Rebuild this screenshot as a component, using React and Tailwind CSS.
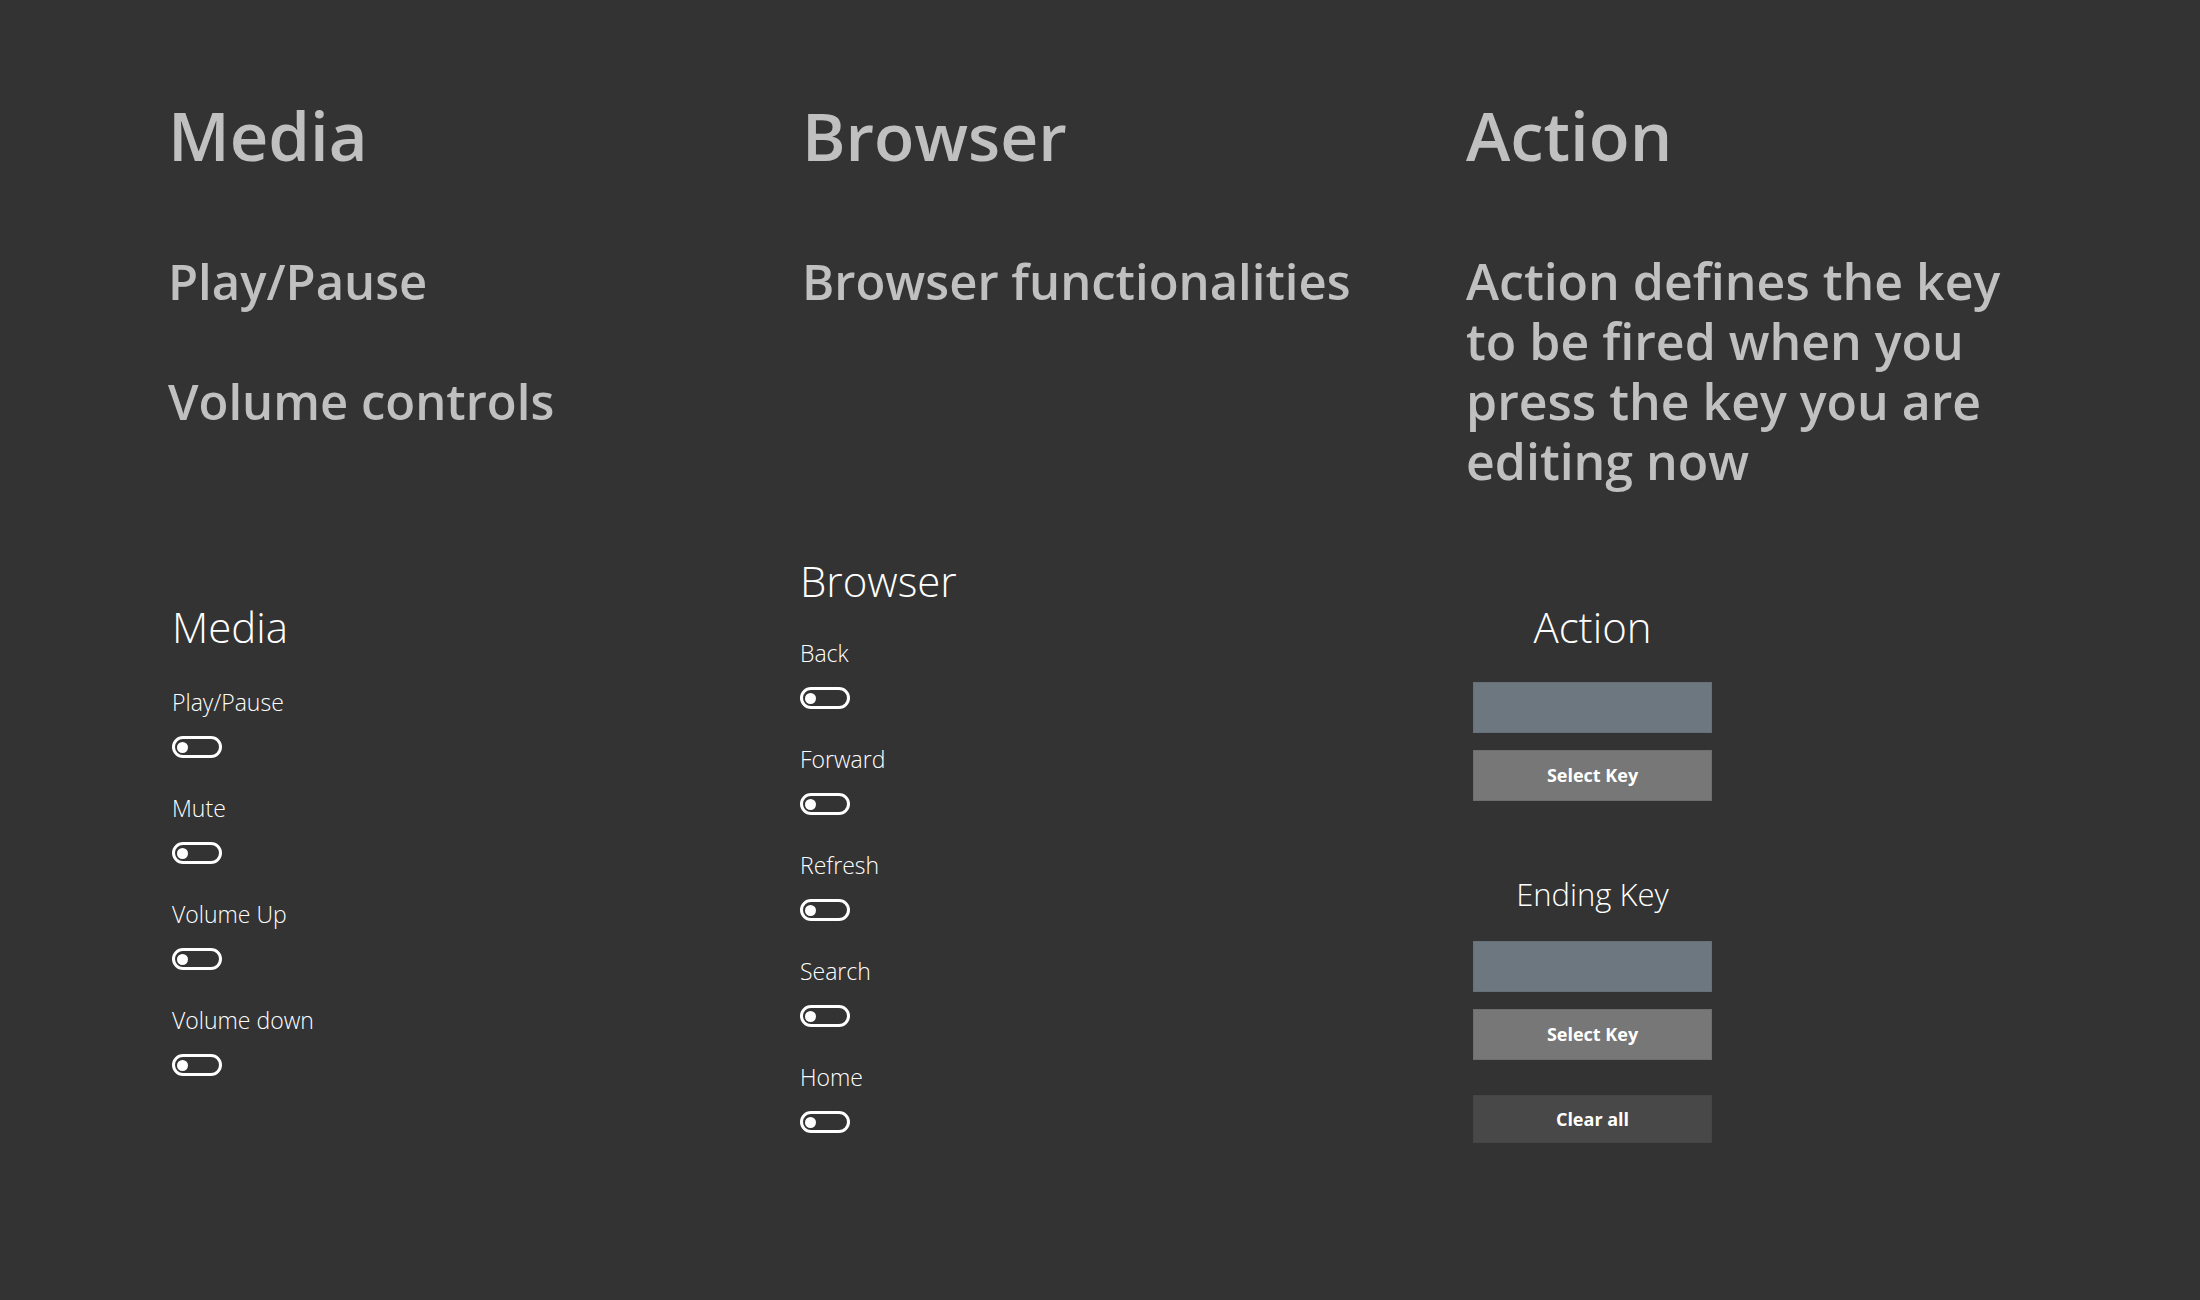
import React from 'react';

const mediaKeys = ['Play/Pause', 'Mute', 'Volume Up', 'Volume down'];
const browserKeys = ['Back', 'Forward', 'Refresh', 'Search', 'Home'];

/* ── Toggle (off state) ── */
function Toggle() {
  return (
    <div className="flex h-[22px] w-[50px] items-center rounded-full border-[3px] border-white px-[2px]">
      <div className="h-[11px] w-[11px] rounded-full bg-white" />
    </div>
  );
}

function ToggleRow({ label }) {
  return (
    <div className="h-[106px]">
      <p className="text-[23px] leading-[22px] font-light text-white">{label}</p>
      <div className="mt-[23px]">
        <Toggle />
      </div>
    </div>
  );
}

function KeyBox() {
  return <div className="h-[51px] w-full border border-[#65707a] bg-[#6c7780]" />;
}

function KeyButton({ children, className = '' }) {
  return (
    <button className={`flex w-full items-center justify-center text-[18px] font-bold text-white ${className}`}>
      {children}
    </button>
  );
}

export default function App() {
  return (
    <div className="h-[1300px] w-full overflow-hidden bg-[#333333] font-['Open_Sans',sans-serif]">
      {/* intro copy */}
      <section className="flex pl-[168px] pt-[102px] font-semibold text-[#c0c0c0]">
        <div className="w-[634px]">
          <h1 className="text-[67px] leading-[67px]">Media</h1>
          <p className="mt-[82px] text-[49px] leading-[60px]">Play/Pause</p>
          <p className="mt-[60px] text-[49px] leading-[60px]">Volume controls</p>
        </div>
        <div className="w-[664px]">
          <h1 className="text-[66px] leading-[67px]">Browser</h1>
          <p className="mt-[82px] text-[49px] leading-[60px]">Browser functionalities</p>
        </div>
        <div className="w-[560px]">
          <h1 className="text-[67px] leading-[67px]">Action</h1>
          <p className="mt-[82px] text-[50px] leading-[60px]">
            Action defines the key
            <br />
            to be fired when you
            <br />
            press the key you are
            <br />
            editing now
          </p>
        </div>
      </section>

      {/* settings */}
      <section className="mt-[69px] flex items-start pl-[172px]">
        <div className="mt-[46px] w-[628px]">
          <h2 className="text-[42px] leading-[42px] font-light text-white">Media</h2>
          <div className="mt-[43px]">
            {mediaKeys.map((k) => (
              <ToggleRow key={k} label={k} />
            ))}
          </div>
        </div>

        <div className="w-[673px]">
          <h2 className="text-[42px] leading-[42px] font-light text-white">Browser</h2>
          <div className="mt-[40px]">
            {browserKeys.map((k) => (
              <ToggleRow key={k} label={k} />
            ))}
          </div>
        </div>

        <div className="mt-[46px] flex w-[239px] flex-col">
          <h2 className="text-center text-[42px] leading-[42px] font-light text-white">Action</h2>
          <div className="mt-[34px]">
            <KeyBox />
          </div>
          <KeyButton className="mt-[17px] h-[51px] border border-[#6e6e6e] bg-[#777777]">Select Key</KeyButton>

          <h2 className="mt-[78px] text-center text-[31px] leading-[31px] font-light text-white">Ending Key</h2>
          <div className="mt-[31px]">
            <KeyBox />
          </div>
          <KeyButton className="mt-[17px] h-[51px] border border-[#6e6e6e] bg-[#777777]">Select Key</KeyButton>
          <KeyButton className="mt-[35px] h-[48px] border border-[#454545] bg-[#484848]">Clear all</KeyButton>
        </div>
      </section>
    </div>
  );
}
